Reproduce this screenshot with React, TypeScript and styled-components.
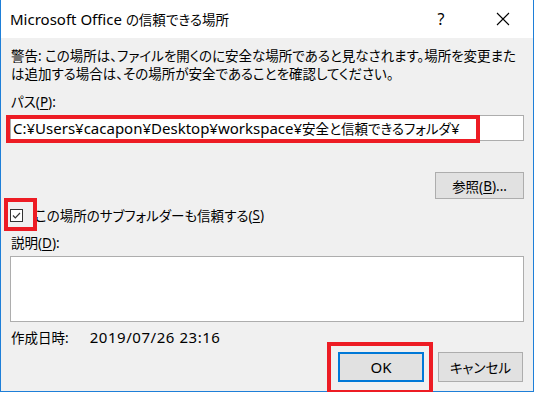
import React from 'react';
import styled, { createGlobalStyle } from 'styled-components';

const Global = createGlobalStyle`
  html, body { margin: 0; padding: 0; background: #ffffff; }
  body {
    font-family: "Noto Sans", "Noto Sans CJK JP", sans-serif;
    color: #000;
  }
  #root { width: 534px; }
`;

const FONT = `"Noto Sans", "Noto Sans CJK JP", sans-serif`;
const RED = '#ed1c24';

const Window = styled.div`
  width: 534px;
  height: 392px;
  box-sizing: border-box;
  border: 1px solid #1e7fd8;
  border-top: none;
  display: flex;
  flex-direction: column;
  background: #f0f0f0;
  font-family: ${FONT};
  font-size: 13.5px;
  font-feature-settings: "palt";
`;

const TitleBar = styled.div`
  height: 38px;
  flex: none;
  background: #ffffff;
  display: flex;
  align-items: center;
  padding: 0 15px 0 9px;
`;

const Title = styled.div`
  flex: 1;
  color: #000;
  padding-bottom: 1px;
  white-space: nowrap;
`;

const Latin = styled.span<{ $ls?: number }>`
  font-family: "Noto Sans", sans-serif;
  font-size: 15px;
  letter-spacing: ${(p) => p.$ls ?? 0}px;
`;

const CaptionButton = styled.div<{ $ml: number }>`
  width: 30px;
  height: 38px;
  margin-left: ${(p) => p.$ml}px;
  display: flex;
  align-items: center;
  justify-content: center;
  font-family: "Noto Sans", sans-serif;
  font-size: 16px;
  color: #000;
`;

const Body = styled.div`
  flex: 1;
  display: flex;
  flex-direction: column;
  padding: 9px 9px 0 9px;
`;

const Warning = styled.div`
  line-height: 18px;
  margin-left: 1px;
  white-space: nowrap;
`;

const Label = styled.div<{ $mt: number }>`
  margin-top: ${(p) => p.$mt}px;
  margin-left: 1px;
  line-height: 18px;
  height: 18px;
`;

const Key = styled.span`
  text-decoration: underline;
  text-underline-offset: 2px;
  text-decoration-thickness: 1px;
`;

const Field = styled.div<{ $h: number; $mt: number }>`
  position: relative;
  margin-top: ${(p) => p.$mt}px;
  height: ${(p) => p.$h}px;
  box-sizing: border-box;
  border: 1px solid #adadad;
  background: #ffffff;
  display: flex;
  align-items: center;
  padding-left: 2px;
  white-space: nowrap;
`;

const Annotation = styled.div<{ $l: number; $t: number; $w: number; $h: number }>`
  position: absolute;
  left: ${(p) => p.$l}px;
  top: ${(p) => p.$t}px;
  width: ${(p) => p.$w}px;
  height: ${(p) => p.$h}px;
  box-sizing: border-box;
  border: 4px solid ${RED};
  pointer-events: none;
  z-index: 2;
`;

const BrowseRow = styled.div`
  display: flex;
  justify-content: flex-end;
  margin-top: 31px;
`;

const Button = styled.div<{ $w: number; $default?: boolean }>`
  position: relative;
  width: ${(p) => p.$w}px;
  box-sizing: border-box;
  border: ${(p) => (p.$default ? '2px solid #0078d7' : '1px solid #adadad')};
  background: #e1e1e1;
  display: flex;
  align-items: center;
  justify-content: center;
`;

const BrowseButton = styled(Button)`
  height: 27px;
`;

const CheckRow = styled.div`
  margin-top: 6px;
  display: flex;
  align-items: center;
  height: 20px;
`;

const CheckBox = styled.div`
  position: relative;
  width: 13px;
  height: 13px;
  box-sizing: border-box;
  border: 1px solid #333333;
  background: #ffffff;
  margin-right: 12px;
  display: flex;
  align-items: center;
  justify-content: center;
`;

const InfoRow = styled.div`
  margin-top: 6px;
  margin-left: 1px;
  height: 18px;
  display: flex;
  align-items: center;
  gap: 21px;
`;

const ButtonRow = styled.div`
  margin-top: 6px;
  display: flex;
  justify-content: flex-end;
  gap: 14px;
  padding-right: 1px;
`;

const DialogButton = styled(Button)`
  height: 30px;
`;

export default function App() {
  return (
    <>
      <Global />
      <Window>
        <TitleBar>
          <Title>
            <Latin>Microsoft Office </Latin>の信頼できる場所
          </Title>
          <CaptionButton $ml={0}>?</CaptionButton>
          <CaptionButton $ml={32}>
            <svg width="14" height="14" viewBox="0 0 14 14">
              <path d="M1 1 L13 13 M13 1 L1 13" stroke="#000" strokeWidth="1.1" fill="none" />
            </svg>
          </CaptionButton>
        </TitleBar>
        <Body>
          <Warning>
            警告: この場所は、ファイルを開くのに安全な場所であると見なされます。場所を変更また
            <br />
            は追加する場合は、その場所が安全であることを確認してください。
          </Warning>
          <Label $mt={10}>
            パス(<Key>P</Key>):
          </Label>
          <Field $h={26} $mt={4}>
            <Latin>C:¥Users¥cacapon¥Desktop¥workspace¥</Latin>安全と信頼できるフォルダ<Latin>¥</Latin>
            <Annotation $l={-5} $t={-1} $w={474} $h={28} />
          </Field>
          <BrowseRow>
            <BrowseButton $w={89}>
              参照(<Key>B</Key>)...
            </BrowseButton>
          </BrowseRow>
          <CheckRow>
            <CheckBox>
              <svg width="11" height="11" viewBox="0 0 11 11">
                <path d="M2 5.5 L4.3 7.8 L9 3" stroke="#333" strokeWidth="1.2" fill="none" />
              </svg>
              <Annotation $l={-7} $t={-12} $w={33} $h={33} />
            </CheckBox>
            この場所のサブフォルダーも信頼する(<Key>S</Key>)
          </CheckRow>
          <Label $mt={9}>
            説明(<Key>D</Key>):
          </Label>
          <Field $h={66} $mt={4} />
          <InfoRow>
            <span>作成日時:</span>
            <Latin $ls={0.55}>2019/07/26 23:16</Latin>
          </InfoRow>
          <ButtonRow>
            <DialogButton $w={86} $default>
              <Latin>OK</Latin>
              <Annotation $l={-13} $t={-12} $w={106} $h={52} />
            </DialogButton>
            <DialogButton $w={85}>キャンセル</DialogButton>
          </ButtonRow>
        </Body>
      </Window>
    </>
  );
}
